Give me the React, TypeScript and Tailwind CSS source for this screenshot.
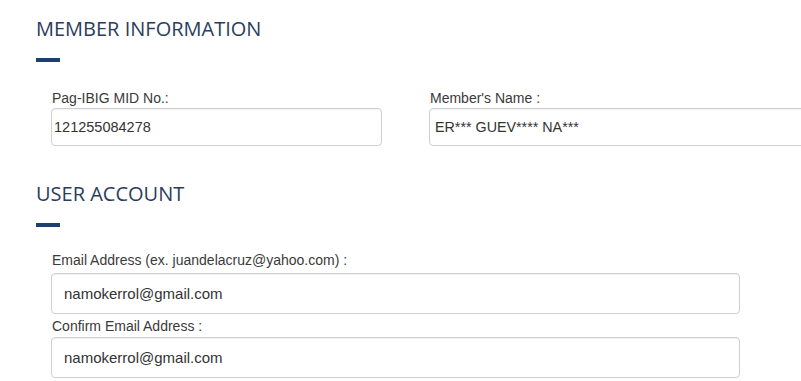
import React from "react";

const SectionTitle = ({ title, className = "" }: { title: string; className?: string }) => (
  <div className={className}>
    <h2 className="font-['Open_Sans',sans-serif] text-[20px] leading-[24px] text-[#2b3d5b]">{title}</h2>
    <div className="mt-[17px] h-[4px] w-[24px] bg-[#1d3e70]" />
  </div>
);

const Field = ({
  label,
  value,
  className = "",
  inputClass = "",
  labelClass = "",
}: {
  label: string;
  value: string;
  className?: string;
  inputClass?: string;
  labelClass?: string;
}) => (
  <div className={`flex flex-col ${className}`}>
    <label className={`pl-px text-[14px] leading-[20px] text-[#3a3a3a] ${labelClass}`}>{label}</label>
    <input
      readOnly
      value={value}
      className={`rounded-[4px] border border-[#cfcfcf] bg-white text-[#333] outline-none shadow-[inset_0_1px_1px_rgba(0,0,0,0.05)] ${inputClass}`}
    />
  </div>
);

export default function App() {
  return (
    <div className="w-[801px] h-[381px] overflow-hidden bg-white font-['Liberation_Sans',Arial,sans-serif]">
      <div className="pl-[36px] pt-[17px]">
        <SectionTitle title="MEMBER INFORMATION" />
        <div className="mt-[26px] pl-[15px] flex gap-[47px]">
          <Field
            label="Pag-IBIG MID No.:"
            value="121255084278"
            className="w-[331px] shrink-0"
            inputClass="h-[38px] px-[2px] text-[14.5px]"
          />
          <Field
            label="Member's Name :"
            value="ER*** GUEV**** NA***"
            className="w-[400px] shrink-0"
            inputClass="h-[38px] px-[5px] text-[14.3px]"
          />
        </div>
        <SectionTitle title="USER ACCOUNT" className="mt-[36px]" />
        <div className="mt-[23px] pl-[15px] flex flex-col w-[704px]">
          <Field
            label="Email Address (ex. juandelacruz@yahoo.com) :"
            value="namokerrol@gmail.com"
            labelClass="text-[14.3px]"
            inputClass="mt-[3px] h-[41px] px-[12px] text-[15px]"
          />
          <Field
            label="Confirm Email Address :"
            value="namokerrol@gmail.com"
            className="mt-[2px]"
            inputClass="mt-px h-[41px] px-[12px] text-[15px]"
          />
        </div>
      </div>
    </div>
  );
}
